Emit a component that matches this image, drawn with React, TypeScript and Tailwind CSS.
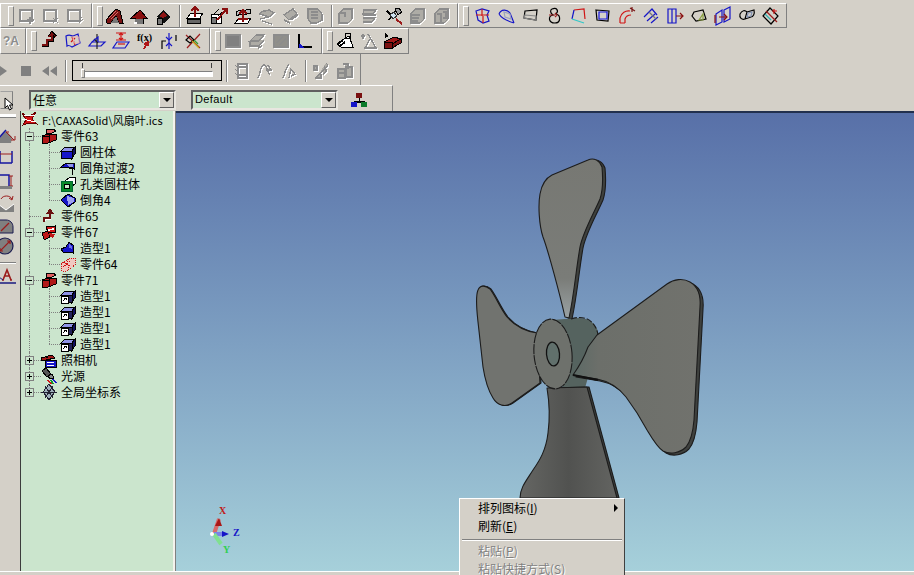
import type { ReactNode } from "react";

const cjk = "font-['Noto_Sans_CJK_SC','Liberation_Sans',sans-serif]";
const mint = "bg-[#cbe5cd]";

// icons are 20x20, the greyed ones get a white shadow like win2k
function Ico({ children, size = 20 }: { children: ReactNode; size?: number }) {
  return (
    <svg width={size} height={size} viewBox={`0 0 ${size} ${size}`} fill="none" shapeRendering="crispEdges">
      {children}
    </svg>
  );
}

function Off({ d, fill }: { d: string; fill?: string }) {
  return (
    <Ico>
      <path d={d} stroke="#fff" strokeWidth="1.4" transform="translate(1 1)" />
      <path d={d} stroke="#8c8c8c" strokeWidth="1.4" fill={fill} />
    </Ico>
  );
}

function Btn({ children, w = "w-6" }: { children: ReactNode; w?: string }) {
  return <div className={`${w} h-[22px] flex items-center justify-center shrink-0`}>{children}</div>;
}

function Grip({ ml = "ml-1" }: { ml?: string }) {
  return <div className={`${ml} w-[6px] h-[20px] shrink-0 border border-t-white border-l-white border-r-[#808080] border-b-[#808080] bg-[#d4d0c8]`} />;
}

function Sep({ ml = "ml-1", mr = "mr-0", h = "h-[22px]" }: { ml?: string; mr?: string; h?: string }) {
  return <div className={`${ml} ${mr} ${h} w-[2px] shrink-0 border-l border-l-[#808080] border-r border-r-white`} />;
}

function Bar({ w, children }: { w: string; children: ReactNode }) {
  return (
    <div className={`${w} h-full shrink-0 flex items-center overflow-hidden border-t border-t-white border-l border-l-white border-r border-r-[#808080] border-b border-b-[#808080]`}>
      {children}
    </div>
  );
}

const row1a = [
  "M3 4H15V15H3ZM13 11V18M10 14H17",
  "M3 4H15V15H3ZM12 12L17 17M17 12L12 17",
  "M3 4H15V15H3ZM12 16L17 11M14 17L18 13",
];

const Roof = () => (
  <Ico>
    <path d="M1 14L11 3L15 5L18 17H14L11 10L6 17H2Z" fill="#7a1414" stroke="#000" />
    <path d="M11 10L14 17H6Z" fill="#777" />
    <path d="M4 12L11 5M6 13L13 6" stroke="#d96a6a" />
  </Ico>
);
const House = () => (
  <Ico>
    <path d="M2 12L11 4L18 12L14 12L14 17H6V12Z" fill="#8a0f0f" stroke="#000" />
    <path d="M6 13H14V18H6Z" fill="#777" />
    <path d="M5 16H8V18H5Z" fill="#fff" />
  </Ico>
);
const Diamond = () => (
  <Ico>
    <path d="M4 11L10 4L18 11L11 17Z" fill="#111" />
    <path d="M6 10L10 6L14 10L10 12Z" fill="#8f1515" />
    <path d="M4 12H9V18H4Z" fill="#777" stroke="#000" />
  </Ico>
);
const Lift = () => (
  <Ico>
    <path d="M2 12L6 7H18L15 12ZM2 12H15V17H2Z" fill="#fff" stroke="#000" />
    <path d="M2 13H15V17H2Z" fill="#666" stroke="#000" />
    <path d="M10 11V2M6 5L10 1L14 5" stroke="#8a0f0f" strokeWidth="2" />
  </Ico>
);
const Lift2 = () => (
  <Ico>
    <path d="M2 8H12V17H2Z" fill="#fff" stroke="#000" />
    <path d="M2 11H7V17H2Z" fill="#777" stroke="#000" />
    <path d="M8 14L17 4M13 3H18V8" stroke="#8a0f0f" strokeWidth="2" />
    <path d="M5 8L10 3M9 10L13 6" stroke="#000" />
  </Ico>
);
const Lift3 = () => (
  <Ico>
    <path d="M3 6C7 2 12 6 17 3L18 7C12 10 7 6 4 10Z" fill="#bbb" stroke="#000" />
    <path d="M2 17L6 12H18L15 17Z" fill="#fff" stroke="#000" />
    <path d="M10 16V5M6 8L10 4L14 8" stroke="#8a0f0f" strokeWidth="2" />
    <path d="M5 13H15" stroke="#8a0f0f" strokeWidth="2" />
  </Ico>
);
const Sat = () => (
  <Ico>
    <path d="M3 5L8 10M13 3L5 14" stroke="#000" strokeWidth="1.5" />
    <path d="M11 3L15 2L18 6L14 9Z" fill="#999" stroke="#000" />
    <path d="M6 9L10 6L13 10L9 13Z" fill="#cfe3f2" stroke="#333" />
    <path d="M12 13L18 18" stroke="#9b1c1c" strokeWidth="2" />
  </Ico>
);

const row1b = [
  "M3 8C6 3 9 6 12 4L17 7L12 11ZM5 15L15 18M3 13L12 11",
  "M3 9L12 3L16 8L8 14ZM3 14L9 17M10 14L17 9",
  "M3 3L13 3L17 8V14L12 17H6L3 13ZM6 6H13M6 9H13M6 12H13",
];
const row1c = [
  "M3 7L8 3H16V13L12 17H3ZM3 7H9V11",
  "M4 4H16L13 8H3ZM3 9H16M3 12H15L12 16H3",
];
const row1d = [
  "M3 7L8 3H16V13L12 17H3ZM4 9H12M4 12H11M4 15H10",
  "M3 7L8 3H16V13L12 17H3ZM5 8H9V16M11 6H14V12H11",
];

// thin wire icons on the right of row 1, [d, colour] pairs
const wires: [string, string][][] = [
  [["M3 5L9 3L16 5L14 9L16 15L10 17L5 14Z", "#1515c8"], ["M9 3V10M3 9H16M10 10V17", "#d01515"]],
  [["M2 8C4 3 10 3 13 7L17 17M2 8C5 13 10 15 17 17", "#1515c8"], ["M7 6L13 8L14 13L8 11Z", "#9aa0c0"]],
  [["M4 5L16 4L15 14L3 12Z", "#000"], ["M4 9L15 10L15 14L3 12Z", "#888"]],
  [["M7 3C12 1 14 5 11 8C16 9 16 17 10 17C3 17 3 10 8 9C5 7 5 4 7 3Z", "#000"], ["M4 9H10M10 7L12 9L10 11", "#9b1c1c"]],
  [["M5 4L15 3L16 13", "#d01515"], ["M5 4L3 13", "#1515c8"], ["M3 13L15 17", "#30c8c8"]],
  [["M3 4L16 5L15 15L4 14Z", "#000"], ["M6 6H14V13H6Z", "#1515e0"]],
  [["M3 17V12C4 7 9 4 13 5M8 17V13C9 10 11 9 14 9M3 17H8", "#d01515"], ["M13 2L18 5M15 1V6", "#7a1414"]],
  [["M3 11L11 3L16 9M6 15L14 8M10 17L17 11", "#1515c8"], ["M8 6L15 13", "#777"]],
  [["M3 3H11V17H3ZM7 3V17", "#1515c8"], ["M11 10H18M15 7L18 10L15 13", "#8a0f0f"]],
  [["M5 6L14 4L17 13L7 15L3 10Z", "#000"], ["M10 14L14 8L14 14Z", "#8aa040"]],
  [["M3 8L9 4V16L3 19ZM11 4L17 1V13L11 16Z", "#1515c8"], ["M2 9V17M6 11H14M11 8L14 11L11 14", "#8a0f0f"]],
  [["M3 8C5 4 8 4 10 6L8 13C5 14 2 12 3 8ZM10 6L17 4C18 8 16 11 14 11L8 13", "#000"], ["M11 7L15 6L14 10L10 11Z", "#8090b0"]],
  [["M2 10L9 2L17 10L10 18Z", "#000"], ["M5 5L16 16", "#9b1c1c"], ["M13 3V8M11 5H16", "#d01515"], ["M4 8L10 14", "#30b0b0"]],
];

const Wire = ({ parts }: { parts: [string, string][] }) => (
  <Ico>
    {parts.map(([d, c]) => (
      <path key={d + c} d={d} stroke={c} strokeWidth="1.2" shapeRendering="auto" />
    ))}
  </Ico>
);

const row2icons: ReactNode[] = [
  <Ico key="a">
    <path d="M3 14H8V9H13V3M10 6L13 2L17 6" stroke="#000" strokeWidth="3" />
    <path d="M3 14H8V9H13V3M10 6L13 2L17 6" stroke="#7a1010" strokeWidth="1.4" />
  </Ico>,
  <Wire key="b" parts={[["M3 5C7 3 8 5 10 5L15 3L17 12L9 16C6 14 5 14 4 15Z", "#1515c8"], ["M9 6L12 14M12 7L8 11", "#d01515"], ["M10 6H16V12H11Z", "#e8b0b0"]]} />,
  <Wire key="c" parts={[["M5 11H18L14 15H2Z", "#1515c8"], ["M10 3V18M7 8L11 12", "#222"], ["M5 11L11 6V11", "#1515c8"]]} />,
  <Wire key="d" parts={[["M5 2H15M5 9H15", "#d01515"], ["M10 2V9M8 4L10 2L12 4M8 7L10 9L12 7", "#d01515"], ["M6 11H18L14 17H2Z", "#1515c8"], ["M7 13H14", "#d01515"]]} />,
  <Ico key="e">
    <text x="2" y="10" fontSize="10" fontWeight="700" fontFamily="'Liberation Serif',serif" fill="#000">f(x)</text>
    <path d="M9 18L12 12M9 13L13 11L13 15" stroke="#b01515" strokeWidth="1.5" />
  </Ico>,
  <Wire key="f" parts={[["M3 18V10H7M17 4V10", "#000"], ["M10 2V18", "#1515c8"], ["M7 6L10 9L13 6M7 15L10 12L13 15", "#1515c8"]]} />,
  <Wire key="g" parts={[["M3 4L17 17M17 3L4 17", "#9b1c1c"], ["M3 9L7 5L11 9L7 12Z", "#000"], ["M9 10L13 14L16 17", "#c8b020"], ["M11 9L15 13", "#30a030"]]} />,
];

const row3b = [
  "M3 4L5 6M3 8L5 10M3 12L5 14M6 3H15V17H6ZM6 6H15M6 14H15",
  "M2 17C4 14 4 5 8 4C11 3 11 11 14 14M12 4L15 9L10 9",
  "M3 17C5 14 5 6 9 4M9 17L11 8L15 13L11 15",
];
const row3c = [
  "M3 5H6V9H3ZM15 2L17 4L6 16M13 5C16 7 16 12 12 13M4 17H10V13",
  "M3 8H10V17H3ZM3 12H10M8 3H13V8M11 6H17V16H11Z",
];

const SmallBtn = ({ d }: { d: string }) => (
  <svg width="18" height="18" viewBox="0 0 18 18" fill="#808080">
    <path d={d} />
  </svg>
);

function Slider() {
  return (
    <div className="ml-[5px] w-[150px] h-[21px] shrink-0 border-[1.5px] border-black px-2 pt-[2px] flex flex-col">
      <div className="flex justify-between px-px">
        <div className="w-px h-[5px] bg-[#404040]" />
        <div className="w-px h-[5px] bg-[#404040]" />
      </div>
      <div className="relative mt-[3px] h-[6px] border border-t-[#808080] border-l-[#808080] border-b-white border-r-white bg-white">
        <div className="absolute -left-[1px] -top-[3px] w-[4px] h-[9px] bg-[#d4d0c8] border border-white border-r-[#808080] border-b-[#808080]" />
      </div>
    </div>
  );
}

function Combo({ text, ml, latin }: { text: string; ml: string; latin?: boolean }) {
  return (
    <div className={`${ml} mt-[2px] w-[147px] h-[20px] shrink-0 flex items-center ${mint} border-2 border-t-[#606060] border-l-[#606060] border-b-[#e8e6e0] border-r-[#e8e6e0]`}>
      <span className={`flex-1 pl-[2px] truncate ${latin ? "font-['Liberation_Sans',sans-serif] text-[11px] tracking-[0.4px]" : `${cjk} text-[12px]`} text-black`}>
        {text}
      </span>
      <div className="w-[15px] h-[16px] flex items-center justify-center bg-[#d4d0c8] border border-t-white border-l-white border-r-[#606060] border-b-[#606060]">
        <div className="w-0 h-0 border-x-[4px] border-x-transparent border-t-[4px] border-t-black" />
      </div>
    </div>
  );
}

function ModeRow() {
  return (
    <div className="h-[26px] flex items-center border-t border-t-white w-[393px] border-r border-r-[#808080]">
      <div className="w-[13px] h-[18px] shrink-0 mt-[3px] border border-t-[#a0a0a0] border-r-[#808080] border-b-[#808080] border-l-transparent relative">
        <svg className="absolute left-[3px] top-[5px]" width="10" height="14" viewBox="0 0 10 14">
          <path d="M1 1V11L3.5 8.5L5.5 13L7.5 12L5.5 8H9Z" fill="#fff" stroke="#000" />
        </svg>
      </div>
      <Combo text="任意" ml="ml-4" />
      <Combo text="Default" ml="ml-[15px]" latin />
      <svg className="ml-[12px] mt-[2px] shrink-0" width="18" height="16" viewBox="0 0 18 16" shapeRendering="crispEdges">
        <path d="M9 6V10M4 11V9H14V11" stroke="#000" />
        <path d="M6 1H12V6H6Z" fill="#7a1010" />
        <path d="M1 10H7V15H1Z" fill="#1515c8" />
        <path d="M11 10H17V15H11Z" fill="#0a7a2a" />
      </svg>
    </div>
  );
}

function Toolbars() {
  return (
    <div className="h-[111px] shrink-0 pt-[3px] flex flex-col bg-[#d4d0c8]">
      <div className="h-[25px] flex w-[787px]">
        <Bar w="w-[92px]">
          <Grip ml="ml-[7px]" />
          <div className="w-px" />
          {row1a.map((d) => <Btn key={d}><Off d={d} /></Btn>)}
        </Bar>
        <Bar w="w-[366px]">
          <Grip ml="ml-1" />
          <Btn><Roof /></Btn>
          <Btn><House /></Btn>
          <Btn><Diamond /></Btn>
          <Sep ml="ml-1" mr="mr-[2px]" />
          <Btn><Lift /></Btn>
          <Btn><Lift2 /></Btn>
          <Btn><Lift3 /></Btn>
          {row1b.map((d) => <Btn key={d}><Off d={d} fill="#aeaca6" /></Btn>)}
          <Sep ml="ml-1" mr="mr-px" />
          {row1c.map((d) => <Btn key={d}><Off d={d} fill="#b4b2ac" /></Btn>)}
          <Btn><Sat /></Btn>
          {row1d.map((d) => <Btn key={d}><Off d={d} fill="#aeaca6" /></Btn>)}
        </Bar>
        <Bar w="w-[329px]">
          <Grip ml="ml-1" />
          <div className="w-[2px]" />
          {wires.map((p, i) => <Btn key={i}><Wire parts={p} /></Btn>)}
        </Bar>
      </div>
      <div className="h-[26px] flex w-[409px]">
        <Bar w="w-[26px]">
          <Btn w="w-[20px]">
            <span className="text-[12px] font-bold text-[#8c8c8c] font-['Liberation_Sans',sans-serif] [text-shadow:1px_1px_0_#fff]">?A</span>
          </Btn>
        </Bar>
        <Bar w="w-[184px]">
          <Grip ml="ml-1" />
          {row2icons.map((icon, i) => <Btn key={i}>{icon}</Btn>)}
        </Bar>
        <Bar w="w-[112px]">
          <Grip ml="ml-1" />
          <Btn><Off d="M3 4H17V16H3Z" fill="#808080" /></Btn>
          <Btn><Off d="M3 10L9 4H17L12 10ZM3 10V15H12L17 9M11 17L15 15" fill="#aeaca6" /></Btn>
          <Btn><Off d="M3 4H17V16H3ZM5 12L12 6M8 14L15 8" fill="#908f8a" /></Btn>
          <Btn>
            <Ico>
              <path d="M4 3V16H17" stroke="#000" strokeWidth="1.5" />
              <path d="M4 13L8 16H4Z" fill="#1515c8" stroke="#1515c8" />
            </Ico>
          </Btn>
        </Bar>
        <Bar w="w-[87px]">
          <Grip ml="ml-1" />
          <Btn>
            <Ico>
              <path d="M2 13L9 8L14 5L18 16H6Z" fill="#fff" stroke="#000" />
              <path d="M4 12L8 9M5 15L10 11" stroke="#000" strokeWidth="2" />
              <circle cx="13" cy="5" r="3" stroke="#000" />
            </Ico>
          </Btn>
          <Btn><Off d="M2 5H6M4 3V8M9 3L17 17H6L11 8" /></Btn>
          <Btn>
            <Ico>
              <path d="M1 11L11 6L18 8L9 13Z" fill="#a01818" stroke="#000" />
              <path d="M1 11H9V17H1ZM9 13L18 8V12L9 17Z" fill="#7a1010" stroke="#000" />
              <path d="M2 2L6 5L2 7Z" fill="#000" />
            </Ico>
          </Btn>
        </Bar>
      </div>
      <div className="h-[31px] w-[361px] flex items-center border-r border-r-[#808080] pt-[2px]">
        <Btn w="w-[14px]">
          <svg width="14" height="18" viewBox="0 0 14 18"><path d="M0 4L7 9L0 14Z" fill="#808080" /></svg>
        </Btn>
        <Btn><SmallBtn d="M4 4H14V14H4Z" /></Btn>
        <Btn><SmallBtn d="M1 9L8 4V14ZM9 9L16 4V14Z" /></Btn>
        <Sep ml="ml-[3px]" />
        <Slider />
        <Sep ml="ml-[4px]" />
        <div className="w-[2px]" />
        {row3b.map((d) => <Btn key={d}><Off d={d} /></Btn>)}
        <Sep ml="ml-[3px]" />
        <div className="w-[2px]" />
        {row3c.map((d) => <Btn key={d}><Off d={d} fill="#aeaca6" /></Btn>)}
      </div>
      <ModeRow />
    </div>
  );
}

// left vertical strip, icons run off the edge a bit
const stripIcons: { mt: string; node: ReactNode }[] = [
  { mt: "mt-[9px]", node: <g><path d="M-2 13L6 4L12 10L11 16H-2Z" fill="#808080" /><path d="M-2 12L6 3" stroke="#1515a0" strokeWidth="1.5" /><path d="M6 5L14 13M11 13H15V9M9 5L6 5" stroke="#9b1c1c" /></g> },
  { mt: "mt-[4px]", node: <g><path d="M0 2V14M12 2V14M0 14H12" stroke="#1515a0" strokeWidth="1.5" /><path d="M0 5H12" stroke="#9b1c1c" /></g> },
  { mt: "mt-[5px]", node: <g><path d="M0 3H9V15H0" stroke="#1515a0" strokeWidth="1.5" /><path d="M11 4V14M9 4H13M9 14H13" stroke="#9b1c1c" /><path d="M0 14H12V17H0Z" fill="#808080" /></g> },
  { mt: "mt-[4px]", node: <g><path d="M-2 10L6 16L14 10V18H-2Z" fill="#808080" /><path d="M-2 10L6 16L14 10" stroke="#fff" /><path d="M1 5C3 1 10 1 12 5M9 4L12 6L13 2" stroke="#9b1c1c" /></g> },
  { mt: "mt-[5px]", node: <g><path d="M-3 16V3H6C10 3 13 6 13 10V16Z" fill="#808080" stroke="#1a1a50" /><path d="M1 14L9 6" stroke="#9b1c1c" strokeWidth="1.2" /></g> },
  { mt: "mt-[2px]", node: <g><circle cx="5" cy="9" r="8" fill="#808080" stroke="#1a1a50" strokeWidth="1.2" /><path d="M0 14L10 4M7 4H10V7M0 11V14H3" stroke="#9b1c1c" strokeWidth="1.2" /></g> },
];

function Strip() {
  return (
    <div className="w-5 shrink-0 bg-[#d4d0c8] flex flex-col overflow-hidden">
      <div className="mt-[3px] h-[4px] w-4 bg-white border-b border-b-[#808080]" />
      {stripIcons.map((s, i) => (
        <svg key={i} className={`${s.mt} shrink-0 overflow-visible`} width="16" height="18" viewBox="0 0 16 18" fill="none">
          {s.node}
        </svg>
      ))}
      <div className="mt-[7px] h-[2px] w-4 border-t border-t-[#808080] border-b border-b-white" />
      <svg className="mt-[3px] shrink-0" width="16" height="18" viewBox="0 0 16 18" fill="none">
        <path d="M0 16H16" stroke="#1a1a80" strokeWidth="1.5" />
        <path d="M3 13L7 3L11 13M4 13H2M12 13H10M5 9H10" stroke="#9b1c1c" strokeWidth="1.6" />
        <path d="M-1 10L3 13" stroke="#1a1a80" />
      </svg>
    </div>
  );
}

// tree icons, 16x16
const Part = ({ c = "#b01818" }: { c?: string }) => (
  <Ico size={16}>
    <path d="M1 8L7 6L15 6V12L7 15H1Z" fill={c} stroke="#000" />
    <path d="M5 2L12 1L15 3L9 6L5 5Z" fill="#e06060" stroke="#000" />
    <path d="M8 7V14M1 8H8" stroke="#000" />
  </Ico>
);
const Block = ({ link }: { link?: boolean }) => (
  <Ico size={16}>
    <path d="M5 3H15L12 7H1Z" fill="#8f93e8" stroke="#000" />
    <path d="M1 7H12V14H1Z" fill={link ? "#23235a" : "#1515c8"} stroke="#000" />
    <path d="M12 7L15 3V10L12 14Z" fill="#101060" stroke="#000" />
    {link && <path d="M1 8H8V15H1Z" fill="#fff" stroke="#000" />}
    {link && <path d="M3 13L6 10M4 10H6V12" stroke="#000" />}
  </Ico>
);
const Fillet = () => (
  <Ico size={16}>
    <path d="M1 7L6 3H14V9L11 7H7Z" fill="#1515c8" stroke="#000" />
    <path d="M6 4H13V7H9Z" fill="#8f93e8" />
    <path d="M9 8L12 9V15" stroke="#000" />
  </Ico>
);
const HoleIco = () => (
  <Ico size={16}>
    <path d="M5 5L10 1H15V8L12 10" stroke="#000" fill="#fff" />
    <path d="M1 5H12V15H1Z" fill="#0a8a2a" stroke="#063" />
    <path d="M4 8H9V12H4Z" fill="#cfe8d0" stroke="#000" />
  </Ico>
);
const Chamfer = () => (
  <Ico size={16}>
    <path d="M1 8L8 2L15 6V10L8 15Z" fill="#1515c8" stroke="#000" />
    <path d="M7 4L14 6V10L8 13Z" fill="#9da2f0" />
  </Ico>
);
const Path65 = () => (
  <Ico size={16}>
    <path d="M3 14V10H9V4M6 6L9 2L12 6" stroke="#6a1010" strokeWidth="2" />
    <path d="M4 13V11H10" stroke="#fff" />
  </Ico>
);
const Part67 = () => (
  <Ico size={16}>
    <path d="M1 9L7 7L9 13L5 15H3Z" fill="#c01818" stroke="#000" />
    <path d="M5 3L14 2V8L7 8Z" fill="#d01818" stroke="#000" />
    <path d="M7 6L13 5" stroke="#fff" strokeWidth="1.5" />
    <path d="M8 9L14 10L12 14L9 13Z" fill="#c01818" />
  </Ico>
);
const Shape1 = () => (
  <Ico size={16}>
    <path d="M1 9L6 7L9 2L13 5V13L8 12L3 12Z" fill="#1515c8" stroke="#000" />
    <path d="M9 4L12 6V9L9 8Z" fill="#6a6ee8" />
  </Ico>
);
const Dotted = () => (
  <Ico size={16}>
    <path d="M1 8L10 2L15 2V9L7 15H2Z" fill="#f0c8c0" stroke="#d01515" strokeDasharray="1 1" />
    <path d="M4 6L12 12M3 11L11 5M7 3L9 13" stroke="#d01515" strokeDasharray="1 1" />
  </Ico>
);
const Camera = () => (
  <Ico size={16}>
    <path d="M0 6L11 3L14 6L5 8H0Z" fill="#a01818" stroke="#000" />
    <circle cx="6" cy="5" r="1.5" fill="#000" />
    <path d="M4 8H15V15H4Z" fill="#1515c8" stroke="#000" />
    <path d="M6 10H13M6 13H13" stroke="#fff" />
  </Ico>
);
const Light = () => (
  <Ico size={16}>
    <path d="M1 3L5 0L10 6L6 9Z" fill="#555" stroke="#000" />
    <path d="M7 8L11 6L13 10L9 11Z" fill="#888" stroke="#000" />
    <path d="M7 12L10 16" stroke="#d01515" strokeWidth="1.6" />
    <path d="M10 12L12 16" stroke="#0a9a2a" strokeWidth="1.6" />
    <path d="M12 11L15 15" stroke="#1515c8" strokeWidth="1.6" />
  </Ico>
);
const Axes = () => (
  <Ico size={16}>
    <path d="M8 0L14 8L8 16L2 8Z" fill="#9fb0bc" stroke="#223" />
    <path d="M4 2L12 14M12 2L4 14M0 8H16" stroke="#223" />
  </Ico>
);

type Node = {
  text: string;
  level: 1 | 2;
  icon: ReactNode;
  box?: "+" | "-";
  last?: boolean;
  lastKid?: boolean;
};

const nodes: Node[] = [
  { text: "零件63", level: 1, icon: <Part />, box: "-" },
  { text: "圆柱体", level: 2, icon: <Block /> },
  { text: "圆角过渡2", level: 2, icon: <Fillet /> },
  { text: "孔类圆柱体", level: 2, icon: <HoleIco /> },
  { text: "倒角4", level: 2, icon: <Chamfer />, lastKid: true },
  { text: "零件65", level: 1, icon: <Path65 /> },
  { text: "零件67", level: 1, icon: <Part67 />, box: "-" },
  { text: "造型1", level: 2, icon: <Shape1 /> },
  { text: "零件64", level: 2, icon: <Dotted />, lastKid: true },
  { text: "零件71", level: 1, icon: <Part />, box: "-" },
  { text: "造型1", level: 2, icon: <Block link /> },
  { text: "造型1", level: 2, icon: <Block link /> },
  { text: "造型1", level: 2, icon: <Block link /> },
  { text: "造型1", level: 2, icon: <Block link />, lastKid: true },
  { text: "照相机", level: 1, icon: <Camera />, box: "+" },
  { text: "光源", level: 1, icon: <Light />, box: "+" },
  { text: "全局坐标系", level: 1, icon: <Axes />, box: "+", last: true },
];

function TreeRow({ node }: { node: Node }) {
  const dots = "border-[#808080] border-dotted";
  return (
    <div className="h-4 flex items-center">
      <div className="relative w-5 h-4 shrink-0">
        <div className={`absolute left-2 top-0 border-l ${dots} ${node.last ? "h-2" : "h-4"}`} />
        {node.level === 1 && <div className={`absolute left-2 top-2 w-3 border-t ${dots}`} />}
        {node.box && (
          <div className={`absolute left-1 top-1 w-[9px] h-[9px] border border-[#808080] ${mint} flex items-center justify-center`}>
            <div className="relative w-[5px] h-px bg-black">
              {node.box === "+" && <div className="absolute left-[2px] -top-[2px] w-px h-[5px] bg-black" />}
            </div>
          </div>
        )}
      </div>
      {node.level === 2 && (
        <div className="relative w-[19px] h-4 shrink-0">
          <div className={`absolute left-2 top-0 border-l ${dots} ${node.lastKid ? "h-2" : "h-4"}`} />
          <div className={`absolute left-2 top-2 w-[11px] border-t ${dots}`} />
        </div>
      )}
      <div className="w-4 h-4 shrink-0">{node.icon}</div>
      <span className="ml-1 text-[12px] leading-4 text-black whitespace-nowrap">{node.text}</span>
    </div>
  );
}

function Tree() {
  return (
    <div className={`w-[153px] shrink-0 pt-px ${mint} border-l border-l-[#3c3c3c] ${cjk} overflow-hidden`}>
      <div className="h-4 flex items-center">
        <Ico size={18}>
          <path d="M1 2L7 6L15 1L11 8L16 13L8 12L2 14L5 9Z" fill="#d01515" stroke="#600" />
          <path d="M1 8L15 11M3 5L14 4" stroke="#fff" />
        </Ico>
        <span className="ml-[3px] text-[11px] leading-4 text-black whitespace-nowrap">F:\CAXASolid\风扇叶.ics</span>
      </div>
      {nodes.map((n, i) => <TreeRow key={i} node={n} />)}
    </div>
  );
}

function Fan() {
  const edge = { stroke: "#1c1c1c", strokeWidth: 1.1, strokeLinejoin: "round" as const };
  const top = "M565 317C560 295 548 250 543 237C539 225 538 205 540 194C542 183 546 178 552 175L588 160C594 157 600 161 602 167C603 178 603 190 600 199C593 215 583 232 580 247C576 270 574 295 569 318Z";
  const left = "M537 333C524 331 515 326 507 317C500 308 496 297 490 289C485 285 480 285 478 290C475 297 477 312 478 322L483 367C485 380 488 390 493 398C497 405 505 408 512 403L540 383Z";
  const right = "M597 335L667 284C674 279 683 278 690 282C697 286 701 295 700 307L694 420C693 432 691 441 686 447C680 453 670 455 663 451C657 447 653 440 647 430C640 417 632 405 626 397C618 387 608 381 597 379L573 375C578 368 584 358 588 347Z";
  const bottom = "M547 388C549 400 550 418 548 433C546 450 540 460 533 470C526 481 520 488 520 498H617L587 387Z";
  return (
    <svg className="absolute inset-0 w-full h-full" viewBox="176 113 738 458">
      <defs>
        <linearGradient id="bladeTop" x1="0" y1="1" x2="0" y2="0">
          <stop offset="0" stopColor="#9aa2a4" />
          <stop offset="0.25" stopColor="#7a7c78" />
          <stop offset="1" stopColor="#777873" />
        </linearGradient>
        <linearGradient id="bladeRight" x1="0" y1="0" x2="1" y2="0">
          <stop offset="0" stopColor="#5c6a66" />
          <stop offset="0.2" stopColor="#6c6f6a" />
          <stop offset="1" stopColor="#71726d" />
        </linearGradient>
        <linearGradient id="bladeBottom" x1="0" y1="0" x2="1" y2="0">
          <stop offset="0" stopColor="#656663" />
          <stop offset="0.5" stopColor="#515250" />
          <stop offset="1" stopColor="#636461" />
        </linearGradient>
      </defs>
      <path d={top} transform="translate(3 1)" fill="#3f413e" {...edge} />
      <path d={top} fill="url(#bladeTop)" {...edge} />
      <path d={left} transform="translate(1 0)" fill="#3f413e" {...edge} />
      <path d={left} fill="#71736f" {...edge} />
      <path d="M578 318C594 317 603 332 597 346L585 388L563 388L552 320Z" fill="#55635f" />
      <path d="M571 319C586 314 596 322 598 335" fill="none" {...edge} strokeDasharray="6 2" />
      <path d={bottom} transform="translate(2 0)" fill="#3f413e" {...edge} />
      <path d={bottom} fill="url(#bladeBottom)" {...edge} />
      <path d={right} transform="translate(3 2)" fill="#3f413e" {...edge} />
      <path d={right} fill="url(#bladeRight)" {...edge} />
      <path d="M573 375L598 380" stroke="#111" strokeWidth="2" />
      <ellipse cx="553" cy="354" rx="19" ry="35" transform="rotate(-5 553 354)" fill="#6e716c" stroke="#1c1c1c" strokeWidth="1.1" strokeDasharray="10 1" />
      <ellipse cx="553" cy="354" rx="6.5" ry="12" transform="rotate(-5 553 354)" fill="#61706c" stroke="#111" strokeWidth="1.3" />
      <path d="M214 534L219 519" stroke="#d86a6a" strokeWidth="4" />
      <path d="M215 526L219 518L222 526Z" fill="#a81818" />
      <path d="M214 534H224" stroke="#7a82e8" strokeWidth="4" />
      <path d="M222 531L229 534L222 537Z" fill="#1515c8" />
      <path d="M214 534L221 544" stroke="#80e090" strokeWidth="4" />
      <circle cx="212" cy="534" r="2" fill="#fff" />
      <text x="219" y="514" fontSize="10" fontWeight="700" fontFamily="'Liberation Serif',serif" fill="#c01818">X</text>
      <text x="233" y="536" fontSize="10" fontWeight="700" fontFamily="'Liberation Serif',serif" fill="#1515c8">Z</text>
      <text x="223" y="553" fontSize="10" fontWeight="700" fontFamily="'Liberation Serif',serif" fill="#30d050">Y</text>
    </svg>
  );
}

function MenuItem({ children, off, arrow }: { children: ReactNode; off?: boolean; arrow?: boolean }) {
  return (
    <div className={`h-[18px] pl-[18px] pr-[6px] flex items-center justify-between text-[12px] leading-[18px] whitespace-nowrap ${off ? "text-[#808080] [text-shadow:1px_1px_0_#fff]" : "text-black"}`}>
      <span>{children}</span>
      {arrow && <div className="w-0 h-0 border-y-[4px] border-y-transparent border-l-[4px] border-l-black" />}
    </div>
  );
}

function ContextMenu() {
  return (
    <div className={`absolute left-[459px] top-[498px] w-[166px] h-[90px] bg-[#d4d0c8] border border-t-white border-l-white border-r-[#404040] border-b-[#404040] ${cjk}`}>
      <MenuItem arrow>排列图标(<u>I</u>)</MenuItem>
      <MenuItem>刷新(<u>E</u>)</MenuItem>
      <div className="mx-[2px] mt-[4px] mb-px h-[2px] border-t border-t-[#808080] border-b border-b-white" />
      <MenuItem off>粘贴(<u>P</u>)</MenuItem>
      <MenuItem off>粘贴快捷方式(<u>S</u>)</MenuItem>
    </div>
  );
}

export default function App() {
  return (
    <div className="relative w-[914px] h-[575px] overflow-hidden flex flex-col bg-[#d4d0c8]">
      <Toolbars />
      <div className="h-[460px] shrink-0 flex">
        <Strip />
        <Tree />
        <div className="w-[3px] shrink-0 bg-[#f4f2ec] border-r border-r-[#808080]" />
        <div className="relative flex-1 border-t-2 border-t-[#22304e] bg-linear-to-b from-[#5870a8] to-[#a6d0da]">
          <Fan />
        </div>
      </div>
      <div className="flex-1 border-t border-t-white" />
      <ContextMenu />
    </div>
  );
}
